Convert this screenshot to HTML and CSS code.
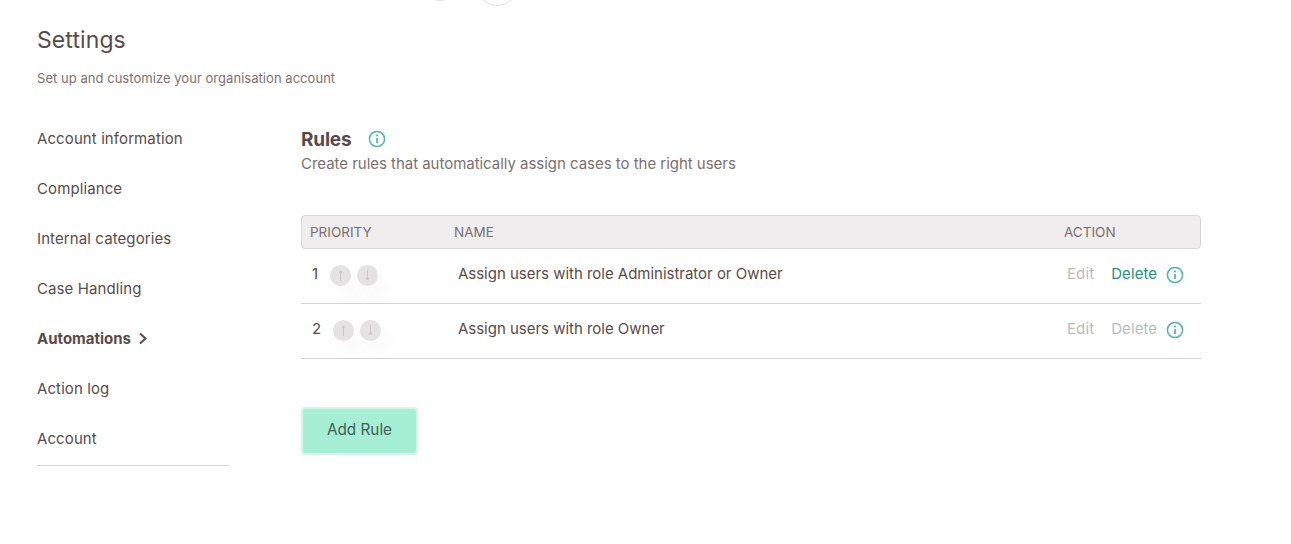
FILE: index.html
```html
<!DOCTYPE html>
<html lang="en">
<head>
    <meta charset="UTF-8">
    <title>Settings</title>
    <link rel="stylesheet" href="styles.css">
</head>
<body>
    <div class="top_arc top_arc_1"></div>
    <div class="top_arc top_arc_2"></div>
    <div class="page">
        <h1 class="page_title">Settings</h1>
        <p class="page_sub">Set up and customize your organisation account</p>
        <div class="layout">
            <ul class="side">
                <li class="side_item">Account information</li>
                <li class="side_item">Compliance</li>
                <li class="side_item">Internal categories</li>
                <li class="side_item">Case Handling</li>
                <li class="side_item side_active">Automations
                    <svg class="chevron" width="10" height="13" viewBox="0 0 10 13"><path d="M2 1.5 7.5 6.5 2 11.5" fill="none" stroke="#5a4b49" stroke-width="2"/></svg>
                </li>
                <li class="side_item">Action log</li>
                <li class="side_item">Account</li>
            </ul>
            <div class="content">
                <div class="rules_head">
                    <h2 class="rules_title">Rules</h2>
                    <svg class="info info_title" width="18" height="18" viewBox="0 0 18 18"><circle cx="9" cy="9" r="7.6" fill="none" stroke="#4fb8a0" stroke-width="1.5"/><path d="M9 8v5" stroke="#4fb8a0" stroke-width="1.7"/><circle cx="9" cy="5.5" r="1.1" fill="#4fb8a0"/></svg>
                </div>
                <p class="rules_sub">Create rules that automatically assign cases to the right users</p>
                <div class="table_head">
                    <span class="col_priority">PRIORITY</span>
                    <span class="col_name">NAME</span>
                    <span class="col_action">ACTION</span>
                </div>
                <div class="row">
                    <div class="col_priority cell_priority">
                        <span class="num">1</span>
                        <span class="arrow"><svg width="9" height="11" viewBox="0 0 9 11"><path d="M4.5 1v10M3 3 4.5 1 6 3" fill="none" stroke="#c9c7c8"/></svg></span>
                        <span class="arrow"><svg width="9" height="11" viewBox="0 0 9 11"><path d="M4.5 0v10M3 8 4.5 10 6 8" fill="none" stroke="#c9c7c8"/></svg></span>
                    </div>
                    <div class="col_name cell_name">Assign users with role Administrator or Owner</div>
                    <div class="col_action cell_action">
                        <span class="link_off link_edit">Edit</span>
                        <span class="link_on">Delete</span>
                        <svg class="info" width="18" height="18" viewBox="0 0 18 18"><circle cx="9" cy="9" r="7.6" fill="none" stroke="#4fb8a0" stroke-width="1.5"/><path d="M9 8v5" stroke="#4fb8a0" stroke-width="1.7"/><circle cx="9" cy="5.5" r="1.1" fill="#4fb8a0"/></svg>
                    </div>
                </div>
                <div class="row">
                    <div class="col_priority cell_priority">
                        <span class="num">2</span>
                        <span class="arrow"><svg width="9" height="11" viewBox="0 0 9 11"><path d="M4.5 1v10M3 3 4.5 1 6 3" fill="none" stroke="#c9c7c8"/></svg></span>
                        <span class="arrow"><svg width="9" height="11" viewBox="0 0 9 11"><path d="M4.5 0v10M3 8 4.5 10 6 8" fill="none" stroke="#c9c7c8"/></svg></span>
                    </div>
                    <div class="col_name cell_name">Assign users with role Owner</div>
                    <div class="col_action cell_action">
                        <span class="link_off link_edit">Edit</span>
                        <span class="link_off">Delete</span>
                        <svg class="info" width="18" height="18" viewBox="0 0 18 18"><circle cx="9" cy="9" r="7.6" fill="none" stroke="#4fb8a0" stroke-width="1.5"/><path d="M9 8v5" stroke="#4fb8a0" stroke-width="1.7"/><circle cx="9" cy="5.5" r="1.1" fill="#4fb8a0"/></svg>
                    </div>
                </div>
                <button class="add_btn">Add Rule</button>
            </div>
        </div>
    </div>
</body>
</html>
```
FILE: styles.css
```css
* {
    box-sizing: border-box;
}
body {
    margin: 0;
    background-color: #ffffff;
    font-family: "Inter", "Liberation Sans", sans-serif;
    color: #5a4b49;
    overflow: hidden;
}
.top_arc {
    position: absolute;
    border: 1px solid #e2e2e2;
    border-radius: 50%;
}
.top_arc_1 {
    left: 422px;
    top: -36px;
    width: 36px;
    height: 37px;
}
.top_arc_2 {
    left: 477px;
    top: -35px;
    width: 41px;
    height: 41px;
}
.page {
    padding: 26px 0 0 37px;
}
.page_title {
    margin: 0;
    font-size: 23px;
    line-height: 28px;
    font-weight: 400;
    letter-spacing: 0.1px;
}
.page_sub {
    margin: 16px 0 0;
    font-size: 13px;
    line-height: 16px;
    color: #7d7070;
    letter-spacing: 0.04px;
}
.layout {
    display: flex;
    margin-top: 27px;
}
.side {
    width: 192px;
    margin: 0;
    padding: 0 0 2px;
    list-style: none;
    border-bottom: 1px solid #d4d4d4;
}
.side_item {
    height: 50px;
    display: flex;
    align-items: center;
    gap: 7px;
    font-size: 15px;
    letter-spacing: 0.1px;
}
.side_active {
    font-weight: 700;
    letter-spacing: 0;
}
.content {
    width: 900px;
    margin-left: 72px;
    padding-top: 14px;
}
.rules_head {
    display: flex;
    align-items: center;
    height: 24px;
}
.rules_title {
    margin: 0;
    font-size: 19px;
    font-weight: 700;
    letter-spacing: -0.2px;
}
.info_title {
    margin-left: 17px;
}
.rules_sub {
    margin: 3px 0 0;
    font-size: 15px;
    line-height: 20px;
    color: #7d7070;
    letter-spacing: -0.03px;
}
.table_head {
    display: flex;
    align-items: center;
    height: 34px;
    margin-top: 41px;
    padding-left: 8px;
    background-color: #efedee;
    border: 1px solid #d8d8d8;
    border-radius: 4px;
    font-size: 13.5px;
    color: #7d7070;
}
.table_head .col_priority {
    width: 144px;
}
.table_head .col_name {
    width: 610px;
}
.row {
    display: flex;
    align-items: center;
    height: 55px;
    padding-bottom: 5px;
    border-bottom: 1px solid #d4d4d4;
    font-size: 15px;
}
.cell_priority {
    display: flex;
    align-items: center;
    width: 157px;
    padding-left: 11px;
}
.num {
    margin-right: 12px;
}
.arrow {
    display: flex;
    align-items: center;
    justify-content: center;
    width: 21px;
    height: 21px;
    margin-top: 4px;
    margin-right: 6px;
    border-radius: 50%;
    background-color: #e4e2e3;
    box-shadow: 10px 12px 20px rgba(0, 0, 0, 0.04);
}
.cell_name {
    width: 609px;
    letter-spacing: -0.02px;
}
.cell_action {
    display: flex;
    align-items: center;
    letter-spacing: 0.1px;
}
.link_off {
    color: #bbbbbb;
}
.link_on {
    color: #27917c;
}
.link_edit {
    margin-right: 17px;
}
.cell_action .info {
    margin-top: 3px;
    margin-left: 9px;
}
.add_btn {
    display: block;
    width: 117px;
    height: 48px;
    margin-top: 48px;
    padding-bottom: 5px;
    background-color: #a6eed4;
    border: 2px solid #d3f6ea;
    border-radius: 4px;
    color: #42615a;
    font-family: inherit;
    font-size: 15.3px;
}
```
